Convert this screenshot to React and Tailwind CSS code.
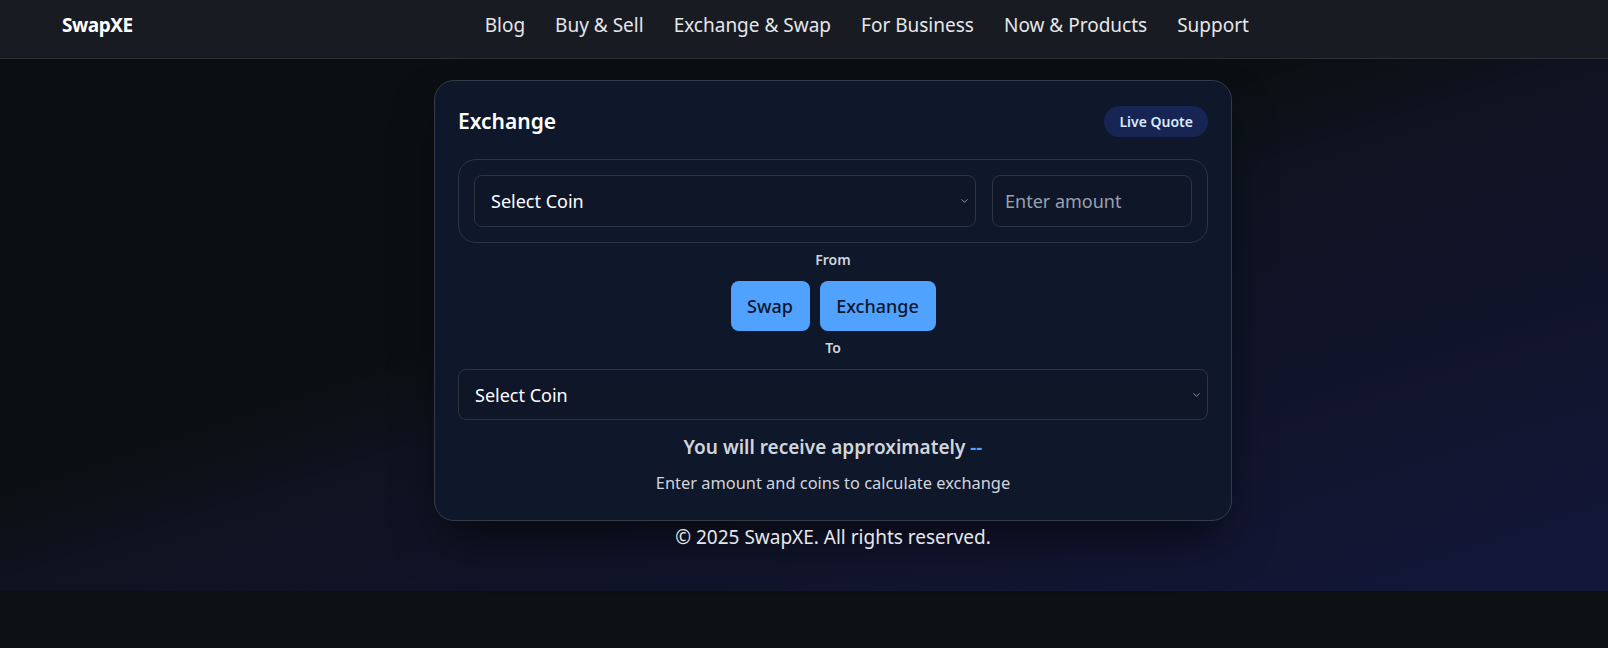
import { ChevronDown } from "lucide-react";

const navLinks = [
  "Blog",
  "Buy & Sell",
  "Exchange & Swap",
  "For Business",
  "Now & Products",
  "Support",
];

function CoinSelect({ className = "" }) {
  return (
    <div className={`relative ${className}`}>
      <select
        defaultValue=""
        className="w-full h-full appearance-none bg-[#0f1628] border border-[#2c3444] rounded-lg pl-4 pr-8 text-lg text-white outline-none"
      >
        <option value="">Select Coin</option>
        <option value="btc">BTC</option>
        <option value="eth">ETH</option>
      </select>
      <ChevronDown
        size={11}
        strokeWidth={2}
        className="absolute right-[6px] top-1/2 -translate-y-1/2 text-gray-400 pointer-events-none"
      />
    </div>
  );
}

export default function App() {
  return (
    <div
      className="min-h-[648px] bg-[#0e1113] text-white"
      style={{ fontFamily: '"Noto Sans", "Open Sans", sans-serif' }}
    >
      {/* Header */}
      <header className="h-[59px] bg-[#181b22] border-b border-[#2b2f37] flex items-center pl-[62px] pb-[8px]">
        <span className="text-[19px] font-bold tracking-tight">SwapXE</span>
        <nav className="ml-[352px] flex items-center gap-[30px] text-[19px] text-gray-200">
          {navLinks.map((l) => (
            <a key={l} href="#" className="hover:text-white">
              {l}
            </a>
          ))}
        </nav>
      </header>

      {/* Main */}
      <main className="h-[532px] bg-gradient-to-br from-[#0c0f11] from-40% via-[#0f1220] to-[#13173a] flex flex-col items-center pl-[58px] pt-[21px]">
        <div className="w-[798px] bg-[#0f172a] border border-[#343c4c] rounded-[20px] shadow-2xl shadow-black/60 px-[23px] pt-[25px] pb-[25px] flex flex-col">
          {/* Title row */}
          <div className="h-[31px] flex items-center justify-between">
            <h2 className="text-[21px] font-semibold">Exchange</h2>
            <span className="h-[31px] px-[15px] rounded-full bg-[#172554] text-blue-100 text-sm font-semibold flex items-center">
              Live Quote
            </span>
          </div>

          {/* From box */}
          <div className="mt-[22px] border border-[#2c3444] rounded-[18px] p-[15px] flex gap-4">
            <CoinSelect className="flex-1 h-[52px]" />
            <input
              type="text"
              placeholder="Enter amount"
              className="w-[200px] h-[52px] bg-[#0f1628] border border-[#2c3444] rounded-lg px-3 text-lg text-white placeholder:text-gray-400 outline-none"
            />
          </div>

          <p className="mt-[7px] text-center text-sm font-semibold text-gray-300 leading-5">
            From
          </p>

          <div className="mt-[11px] flex justify-center gap-[10px]">
            <button className="h-[50px] w-[79px] rounded-lg bg-blue-400 text-slate-900 text-lg font-medium">
              Swap
            </button>
            <button className="h-[50px] w-[116px] rounded-lg bg-blue-400 text-slate-900 text-lg font-medium">
              Exchange
            </button>
          </div>

          <p className="mt-[7px] text-center text-sm font-semibold text-gray-300 leading-5">
            To
          </p>

          <CoinSelect className="mt-[11px] h-[51px]" />

          <p className="mt-[13px] text-center text-[19px] font-semibold text-gray-300">
            You will receive approximately <span className="text-blue-400">--</span>
          </p>
          <p className="mt-[9px] text-center text-[16.4px] text-gray-300">
            Enter amount and coins to calculate exchange
          </p>
        </div>

        <p className="mt-[2px] text-[19px] text-gray-200">© 2025 SwapXE. All rights reserved.</p>
      </main>
    </div>
  );
}
